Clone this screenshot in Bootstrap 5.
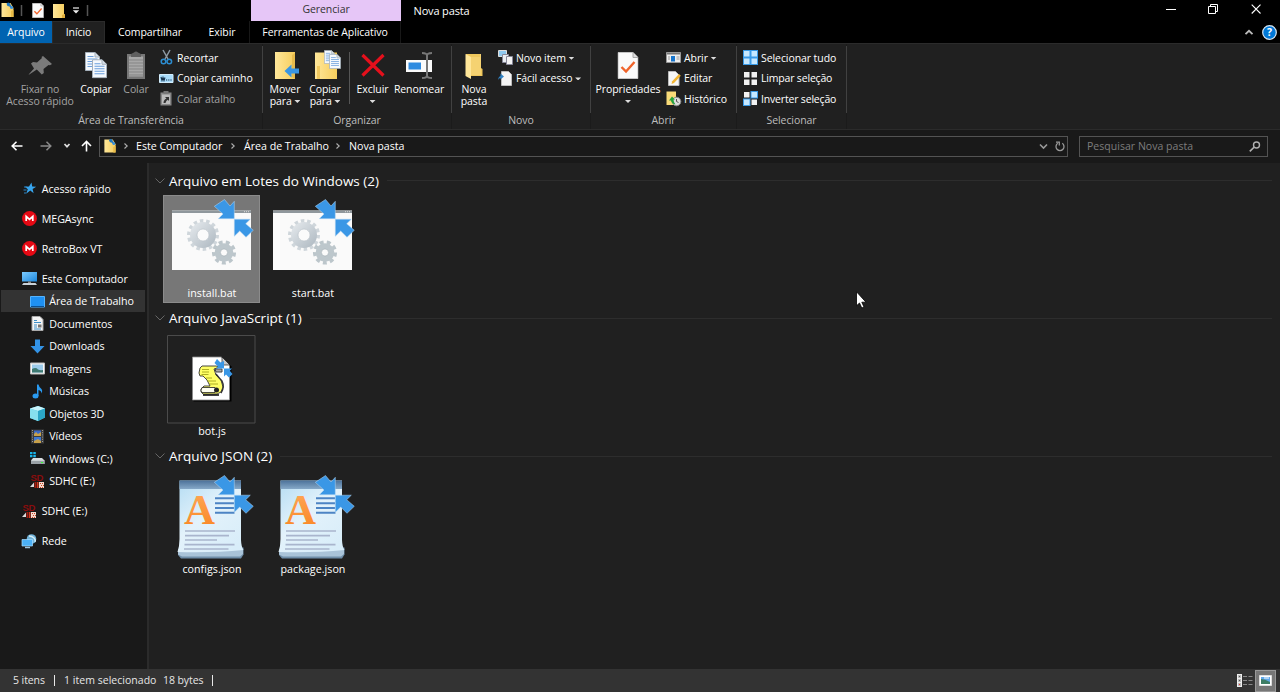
<!DOCTYPE html>
<html lang="pt-BR">
<head>
<meta charset="utf-8">
<title>Nova pasta</title>
<meta name="viewport" content="width=device-width, initial-scale=1">
<link href="https://cdn.jsdelivr.net/npm/bootstrap@5.3.0/dist/css/bootstrap.min.css" rel="stylesheet">
<style>
html,body{height:100%}
body{font-family:"Open Sans","Noto Sans",sans-serif;font-size:10.5px;line-height:12px;letter-spacing:-.08px;color:#fff;background:#202020;overflow:hidden;cursor:default}
svg{display:block;flex:none;overflow:visible}
.explorer{width:1280px;height:692px;position:relative}
.titlebar{height:21px;background:#000}
.ctx-head{width:150px;height:21px;margin-left:162px;background:#e6c6f7;color:#333;line-height:19px}
.tabs{height:22px;background:#000}
.tabs>div{height:22px;line-height:23px;text-align:center;white-space:nowrap}
.tab-file{width:52px;background:#0063b1}
.tab-on{width:53px;background:#202020;border:1px solid #2b2b2b;border-bottom:0;line-height:21px!important}
.ribbon{height:87px;background:#202020;border-top:1px solid #2b2b2b;border-bottom:1px solid #2b2b2b}
.rgroup{height:85px;position:relative;border-right:1px solid #1b1b1b;padding-top:6px}
.rgroup::after{content:"";position:absolute;right:-1px;top:2px;width:1px;height:67px;background:#414141}
.rgroup .caption-row{height:12px;color:#bdbdbd;text-align:center;margin-top:2px}
.rbody{height:62px}
.big{text-align:center;white-space:nowrap;flex:none}
.big svg{margin:1px auto 3px}
.big .lbl{margin-left:-20px;margin-right:-20px}
.off{color:#a3a3a3}
.smalls{gap:5px;display:flex;flex-direction:column}
.smalls>div{height:15.6px;white-space:nowrap}
.smalls .t{margin-left:3px}
.caret{display:inline-block;width:6px;height:3px;background:#ddd;clip-path:polygon(0 0,100% 0,50% 100%);vertical-align:2px}
.addr{height:33px;background:#191919;padding-bottom:1px}
.pathbox{width:969px;height:21px;border:1px solid #535353}
.search{width:189px;height:21px;border:1px solid #535353;margin-left:11px;color:#7d7d7d;letter-spacing:.03px}
.crumb{white-space:nowrap;font-size:10.7px;letter-spacing:-.04px}
.mainrow{height:506px}
.side{width:149px;background:#191919;border-right:2px solid #2b2b2b;padding-top:14.3px;font-size:10.7px;letter-spacing:-.05px}
.side .it{height:22.5px;padding-left:22px;white-space:nowrap}
.side .it svg{margin-right:4.7px}
.side .sub{padding-left:29.5px}
.side .gap{margin-bottom:7.5px}
.side .sel{background:#333;width:144px;margin-left:1px;padding-left:28.5px}
.files{padding:7px 8px 0 7px}
.fgroup{height:137.75px}
.ghead{height:21px;font-size:13.5px;line-height:20px;letter-spacing:0;white-space:nowrap}
.ghead svg{margin:0 4px 0 -1px}
.ghead .rule{height:1px;background:#2d2d2d;margin-left:8px}
.tile{width:97px;height:108px;margin-right:4px;border:1px solid transparent}
.tile svg{margin:-1px 0 0 -1px}
.tile.on{background:#777;border-color:#8b8b8b}
.tile .fn{text-align:center;margin:2.4px -1px 0 0;font-size:10.7px;letter-spacing:.03px}
.status{height:23px;background:#333;color:#e6e6e6;line-height:11px}
.status .bar{width:1px;height:11px;background:#e8e8e8}
.view-on{width:21px;height:22px;background:#777;border:1px solid #999}
.pointer{position:absolute;left:856px;top:291px}
</style>
</head>
<body>
<svg width="0" height="0" class="position-absolute">
<defs>
<linearGradient id="gy" x2="1"><stop stop-color="#ffe79a"/><stop offset="1" stop-color="#f6cd5c"/></linearGradient>
<linearGradient id="gb" x2="1" y2="1"><stop stop-color="#7cccff"/><stop offset="1" stop-color="#1c87dd"/></linearGradient>
<linearGradient id="gj" x2="0.8" y2="1"><stop stop-color="#b4dcf3"/><stop offset=".5" stop-color="#e3f2fb"/><stop offset="1" stop-color="#d8edf9"/></linearGradient>
<linearGradient id="gh" x2="0" y2="1"><stop stop-color="#4c7199"/><stop offset="1" stop-color="#86a9c8"/></linearGradient>
<linearGradient id="go" x2="0" y2="1"><stop stop-color="#ffab5e"/><stop offset="1" stop-color="#f98420"/></linearGradient>
<linearGradient id="gg" x2="1" y2="1"><stop stop-color="#dfe4e8"/><stop offset="1" stop-color="#b4bec6"/></linearGradient>
<symbol id="folderdots" viewBox="0 0 15 16"><path d="M1.500 1h9l3 5v9h-12z" fill="url(#gy)"/><path d="M11 9l2.500-1v7H11z" fill="#e9bb47"/><path d="M6.500 1.500l3-.5 3 4.500-1.500 1-1.500-2-2-.5z" fill="#2c7cc0"/><circle cx="8.300" cy="2" r="1.500" fill="#1f75bd"/><circle cx="11.600" cy="5.500" r="1.500" fill="#3a92dd"/></symbol>
<symbol id="doccheck" viewBox="0 0 21 27"><path d="M.5.5h15l5 5v21H.5z" fill="#fafafa" stroke="#c4c4c4"/><path d="M15.500 .5v5h5" fill="#ddd" stroke="#aaa"/><path d="M4 15l4.500 4.500L17 10" fill="none" stroke="#f0642b" stroke-width="2.400"/></symbol>
<symbol id="page" viewBox="0 0 15 19"><path d="M.5.5h9.500l4.500 4.500v13.500H.5z" fill="#f5f9fd" stroke="#a5b0bb"/><path d="M10 .5v4.500h4.500" fill="#d7e1ea" stroke="#a5b0bb"/><path d="M2.500 4.500h6M2.500 7h10M2.500 9.500h10M2.500 12h10M2.500 14.500h10" stroke="#6a9edb"/></symbol>
<symbol id="mega" viewBox="0 0 15 15"><circle cx="7.500" cy="7.500" r="7.400" fill="#e50914"/><path d="M4.200 10V5.400l3.300 3 3.300-3V10" fill="none" stroke="#fff" stroke-width="1.700"/></symbol>
<symbol id="sd" viewBox="0 0 15 16"><text x="0.500" y="7.800" font-family="Liberation Sans" font-weight="700" font-size="9.500" letter-spacing="-.3" fill="#8b0d0d">SD</text><path d="M0 14l4-4.500V14z" fill="#ddd"/><path d="M4.500 9h2v6h-2z" fill="#a11c10"/><path d="M7 9h1.500v6H7z" fill="#d23b20"/><path d="M9 9h5v6H9z" fill="#f2d9cf"/><path d="M10 10h1v1h-1zM12 10h1v1h-1zM11 12h1v1h-1zM13 12h1v1h-1zM10 14h1v1h-1zM12 14h1v1h-1z" fill="#c8401e"/></symbol>
<symbol id="arrows" viewBox="0 0 97 92"><g fill="#3a97e6" stroke="#b9d9f3" stroke-width=".5"><path d="M61.500 4.500l5.500 6.500 4.300-4.700v17.400h-16l4.700-4.700-8.700-7.700z"/><path d="M71.300 24.200h16l-4.600 4.500 7.600 6.600-7.300 7-6.300-6.300-5.400 5.300z"/></g></symbol>
<symbol id="batch" viewBox="0 0 97 92"><path d="M9 15.500h79V75H9z" fill="#fafafa"/><path d="M9 15.500h79V18H9z" fill="#8f979c"/><path d="M81 16.700h5" stroke="#ddd" stroke-dasharray="1 1"/>
<circle cx="40" cy="40" r="14" fill="none" stroke="#cfd6db" stroke-width="4" pathLength="28" stroke-dasharray="1.100 .9"/><circle cx="40" cy="40" r="9.500" fill="none" stroke="url(#gg)" stroke-width="7"/><circle cx="40" cy="40" r="6" fill="#fbfbfb" stroke="#b9c2c8" stroke-width=".7"/>
<circle cx="61" cy="57.500" r="10.300" fill="none" stroke="#bcc6cb" stroke-width="3.500" pathLength="18" stroke-dasharray="1.100 .9"/><circle cx="61" cy="57.500" r="6.300" fill="none" stroke="#bdc7cc" stroke-width="6"/><circle cx="61" cy="57.500" r="3.600" fill="#fbfbfb" stroke="#a6b1b7" stroke-width=".7"/><use href="#arrows" width="97" height="92"/></symbol>
<symbol id="json" viewBox="0 0 97 92"><path d="M17 77l-2 2v5l3 3.500h60l2.500-4v-7z" fill="#6f8ea9"/><path d="M17 79l-2 .5v4l4 2h58l3-2.500v-5z" fill="#a9c3d8"/><path d="M16.500 9.500H78V69q.3 7 2.500 10-30 3-66 2 2-6 2-13z" fill="url(#gj)"/><path d="M16.500 9.500H78V18H16.500z" fill="url(#gh)"/><text x="21" y="52.500" font-family="Liberation Serif" font-weight="700" font-size="43" fill="url(#go)" letter-spacing="0">A</text><path d="M52 27.300h19M52 32.300h19M52 37h19M52 41.800h19.500" stroke="#4d84c4" stroke-width="2"/><path d="M22 60h50M22 64.700h44M22 69h32M21.500 73.700h50M21 78h44.500" stroke="#a9b5cd" stroke-width="1.700"/><use href="#arrows" width="97" height="92"/></symbol>
<symbol id="jsfile" viewBox="0 0 97 92"><path d="M4.500 2.500h87.500v87.500H4.500z" fill="none" stroke="#4b4b4b"/><path d="M30.500 25H60l8.500 8.500V68.500h-38z" fill="#000"/><path d="M29.500 24H58.500l8 8.500V67h-37z" fill="#fff" stroke="#8a8a8a" stroke-width=".8"/><path d="M59 24v8h8z" fill="#c6c6c6" stroke="#000" stroke-width=".6"/>
<path d="M39 33h14l4 1-6 2 2 6 5 5 2 7-2 5-4 2H40l-2-2v-3l3-3h6l-3-6-4-4h-3l-1-3 1-5z" fill="#ffff66" stroke="#333" stroke-width=".9"/><path d="M39 36.500h7M39 39h7M38.500 41.500h7M43 45h6M44 48h9M46 51h9" stroke="#9b9b10" stroke-width=".8"/><path d="M39 54.500h13q3 2 0 5H39q-2-2 0-5z" fill="#fffff0" stroke="#222" stroke-width=".8"/><path d="M52 36h7v3h-6z" fill="#aaa" stroke="#444"/><path d="M40 62h16" stroke="#000" stroke-width="1.500"/><circle cx="53.500" cy="57" r="2.500" fill="#222"/><path d="M53 41q4 5 6 7 3 6-1 12" fill="none" stroke="#333" stroke-width="1.400"/><g fill="#3a97e6"><path d="M54 26l3.500 3.500 3.500-1.500v7.500h-8l2-2-3.500-3.500z"/><path d="M61 35.500h8l-2.200 2.200 2.700 3.300-3.500 3.500-3-3-2 2z"/></g></symbol>
<symbol id="chev" viewBox="0 0 6 8"><path d="M1.500 1.500L4.200 4 1.500 6.500" fill="none" stroke="#b0b0b0" stroke-width="1.100"/></symbol>
<symbol id="grid" viewBox="0 0 15 15"><path d="M1 1h5.500v5.500H1zM8.500 1H14v5.500H8.500zM1 8.500h5.500V14H1zM8.500 8.500H14V14H8.500z"/></symbol>
</defs>
</svg>

<div class="explorer d-flex flex-column">
  <header class="titlebar d-flex">
    <div class="d-flex align-items-center" style="width:89px">
      <svg width="15" height="16" style="margin-top:-1px"><use href="#folderdots"/></svg>
      <svg width="3" height="12" style="margin-left:5px"><path d="M1.500 0v11" stroke="#555" stroke-width="1.500"/></svg>
      <svg width="12" height="15" style="margin-left:9px"><use href="#doccheck"/></svg>
      <svg width="14" height="16" style="margin-left:8px" viewBox="0 0 14 16"><path d="M1 1h11v10l1 1v3H1z" fill="url(#gy)"/><path d="M10 12l3-1v4h-3z" fill="#e0ad3a"/></svg>
      <svg width="8" height="7" style="margin-left:6px"><path d="M1 1h6" stroke="#eee" stroke-width="1.200"/><path d="M.8 3.200h6.400L4 6.500z" fill="#eee"/></svg>
      <svg width="3" height="12" style="margin-left:6px"><path d="M1.500 0v11" stroke="#555" stroke-width="1.500"/></svg>
    </div>
    <div class="ctx-head text-center">Gerenciar</div>
    <div style="margin-left:12.500px;line-height:21px;font-size:11px;letter-spacing:-.15px">Nova pasta</div>
    <div class="ms-auto d-flex" style="padding:4px 19px 0 0;gap:32.700px">
      <svg width="10" height="10"><path d="M0 5.500h10" stroke="#fff"/></svg>
      <svg width="10" height="10"><path d="M.5 2.500h7v7h-7zM2.500 2.500v-2h7v7h-2" fill="none" stroke="#fff"/></svg>
      <svg width="10" height="10"><path d="M.7.700l8.800 8.800M9.500.700L.7 9.500" stroke="#fff" stroke-width="1.100"/></svg>
    </div>
  </header>
  <nav class="tabs d-flex">
    <div class="tab-file">Arquivo</div><div class="tab-on">Início</div>
    <div style="width:90px">Compartilhar</div><div style="width:54px">Exibir</div>
    <div style="width:152px;border-left:1px solid #181818;border-right:1px solid #181818">Ferramentas de Aplicativo</div>
    <div class="ms-auto d-flex align-items-center" style="padding-right:3px;gap:8px">
      <svg width="10" height="7"><path d="M1.500 5.200L5 1.800l3.500 3.400" fill="none" stroke="#bbb" stroke-width="1.800"/></svg>
      <svg width="15" height="15" viewBox="0 0 15 15"><circle cx="7.500" cy="7.500" r="6.800" fill="#0078d7" stroke="#d8e8f5" stroke-width="1.200"/><text x="7.500" y="11.300" text-anchor="middle" font-size="10.500" font-weight="700" fill="#fff">?</text></svg>
    </div>
  </nav>

  <section class="ribbon d-flex">
    <div class="rgroup" style="width:263px">
      <div class="rbody d-flex">
        <div class="big off" style="width:80px"><svg width="28" height="29" viewBox="0 0 28 29"><path d="M18 5l9 8-2 1.300-1.500-.3-5 4 .3 4-2 1.500-5-5L5 23l-1.500 1 1-1.500L9 17.500l-3-5 2-1.500 4 .5 5-4.500-.500-1z" transform="translate(-1 0)" fill="#7b7b7b"/></svg><div class="lbl">Fixar no<br>Acesso rápido</div></div>
        <div class="big" style="width:32px"><svg width="24" height="29" viewBox="0 0 24 29"><use href="#page" x="1" y="1" width="15" height="19"/><use href="#page" x="8" y="8" width="15" height="19.500"/></svg><div class="lbl">Copiar</div></div>
        <div class="big off" style="width:32px;margin-left:8px"><svg width="20" height="29" viewBox="0 0 20 29"><path d="M1 3h18v25H1z" fill="#777"/><path d="M3 5.500h14v20H3z" fill="#a8a8a8"/><path d="M3 9h14M3 12h14M3 15h14M3 18h14M3 21h14M3 24h14" stroke="#858585"/><path d="M5 3l3-1.500Q10-.5 12 1.500L15 3v3H5z" fill="#5f5f5f"/></svg><div class="lbl">Colar</div></div>
        <div class="smalls" style="margin-left:7px">
          <div class="d-flex align-items-center"><svg width="15" height="15" viewBox="0 0 15 15"><path d="M4 0l5 9M11 0L6 9" stroke="#8d9aa5" stroke-width="1.500"/><circle cx="4.500" cy="11.500" r="2.300" fill="none" stroke="#2c8dd0" stroke-width="1.500"/><circle cx="10.300" cy="11.500" r="2.300" fill="none" stroke="#2c8dd0" stroke-width="1.500"/></svg><span class="t">Recortar</span></div>
          <div class="d-flex align-items-center"><svg width="15" height="15" viewBox="0 0 15 15"><path d="M.5 3.500h13.500v8H.5z" fill="#a9dcfb" stroke="#d2ecfb"/><path d="M2 6l1 3.500 1-3 1 3 1-3" fill="none" stroke="#14304a" stroke-width="1.100"/><path d="M7 9h6" stroke="#14304a" stroke-dasharray="1.200 1"/></svg><span class="t" style="letter-spacing:-.12px">Copiar caminho</span></div>
          <div class="d-flex align-items-center off"><svg width="15" height="15" viewBox="0 0 15 15"><path d="M1.500 1.500h11v13h-11z" fill="#888"/><path d="M3 3.500h8v9.500H3z" fill="#bbb"/><path d="M4.500 0h5v3h-5z" fill="#777"/><path d="M4.500 12q0-3.500 3-4.500L6 6h4v4L8.800 8.800Q7 9.500 6.500 12z" fill="#333"/></svg><span class="t">Colar atalho</span></div>
        </div>
      </div>
      <div class="caption-row">Área de Transferência</div>
    </div>
    <div class="rgroup" style="width:189px">
      <div class="rbody d-flex">
        <div class="big" style="width:40px;margin-left:2px"><svg width="22" height="29" viewBox="0 0 22 29"><path d="M1 1h20v27H1z" fill="url(#gy)"/><path d="M21 2v26l-3-2V4z" fill="#e7bb4c"/><path d="M10.500 20l7-6.500v4H25v5h-7.500v4z" fill="#3995e2"/></svg><div class="lbl">Mover<br>para <i class="caret"></i></div></div>
        <div class="big" style="width:40px"><svg width="21" height="29" viewBox="0 0 21 29"><path d="M0 1.500h22V28H0z" fill="url(#gy)"/><path d="M2 15h3v13H2z" fill="#f1c95f"/><use href="#page" x="9" y="-1" width="11" height="14"/><use href="#page" x="14" y="3" width="12" height="15"/></svg><div class="lbl">Copiar<br>para <i class="caret"></i></div></div>
        <div style="width:1px;height:52px;background:#555;margin:2px 0 0 4px"></div>
        <div class="big" style="width:45px"><svg width="26" height="29" viewBox="0 0 26 29"><path d="M2.500 4l21 20.500M23.500 4L2.500 24.500" stroke="#e5101c" stroke-width="3.200"/></svg><div class="lbl">Excluir<br><i class="caret"></i></div></div>
        <div class="big" style="width:48px"><svg width="28" height="29" viewBox="0 0 28 29"><path d="M1 9h26v12H1z" fill="#fafafa"/><path d="M3.500 11.500H16v7H3.500z" fill="#2e8be0"/><path d="M17 2q5 0 5 2.500v20q0 2.500-5 2.500M27 2q-5 0-5 2.500M27 27q-5 0-5-2.500" fill="none" stroke="#777" stroke-width="2"/></svg><div class="lbl">Renomear</div></div>
      </div>
      <div class="caption-row">Organizar</div>
    </div>
    <div class="rgroup" style="width:139px">
      <div class="rbody d-flex">
        <div class="big" style="width:40px;margin-left:2px"><svg width="18" height="29" viewBox="0 0 18 29"><path d="M1 3h15v14l1.500 1v7H1z" fill="#efc75c"/><path d="M.5 3L6 6v22L.5 25z" fill="#ffe699"/><path d="M6 6h9V3h1v21H6z" fill="#f5d271"/></svg><div class="lbl">Nova<br>pasta</div></div>
        <div class="smalls" style="margin-left:4px">
          <div class="d-flex align-items-center"><svg width="15" height="15" viewBox="0 0 15 15"><path d="M.5.5h8v6h-8z" fill="#8ec8ee" stroke="#ddd"/><path d="M4.500 4.500h6v8h-6z" fill="#e9eef2" stroke="#889"/><path d="M8.500 6.500h6v8h-6z" fill="#f5f5f5" stroke="#889"/></svg><span class="t">Novo item <i class="caret"></i></span></div>
          <div class="d-flex align-items-center"><svg width="15" height="15" viewBox="0 0 15 15"><path d="M3.500.5h7l3 3v11h-10z" fill="#f4f4f4" stroke="#bbb"/><path d="M0 9q.5-3.500 2.500-4V2.500L6 5.500 2.500 8.500V7Q1 7 0 9z" fill="#2f80c2"/></svg><span class="t">Fácil acesso <i class="caret"></i></span></div>
        </div>
      </div>
      <div class="caption-row">Novo</div>
    </div>
    <div class="rgroup" style="width:146px">
      <div class="rbody d-flex">
        <div class="big" style="width:66px;margin-left:4px"><svg width="21" height="29" viewBox="0 0 21 29"><use href="#doccheck" x="-.5" y="1" width="21" height="27"/></svg><div class="lbl">Propriedades<br><i class="caret"></i></div></div>
        <div class="smalls" style="margin-left:5px">
          <div class="d-flex align-items-center"><svg width="15" height="15" viewBox="0 0 15 15"><path d="M.5 2.500h14v10H.5z" fill="#eee" stroke="#999"/><path d="M1 3h13v1.500H1z" fill="#777"/><path d="M5 6h4v5.500H5z" fill="#1775cc"/><path d="M2 7h2M2 9h2M10.500 7h3M10.500 9h3" stroke="#999"/></svg><span class="t">Abrir <i class="caret"></i></span></div>
          <div class="d-flex align-items-center"><svg width="15" height="15" viewBox="0 0 15 15"><path d="M2.500.5h7l3.500 3.500v10.500H2.500z" fill="#f7f7f7" stroke="#bbb"/><path d="M5.500 13l.7-2.700L13 3l1.800 1.700L8 12z" fill="#f2b533"/></svg><span class="t">Editar</span></div>
          <div class="d-flex align-items-center"><svg width="15" height="15" viewBox="0 0 15 15"><path d="M.5.5H10V14H.5z" fill="#f9da78"/><circle cx="10.500" cy="10.500" r="4.300" fill="#ddd" stroke="#888"/><path d="M10.500 8v2.500l2 1" fill="none" stroke="#555"/><path d="M3 9.500l3-4 3 3H7.500q0 3 2 5-4-1-4.500-4z" fill="#23a33a"/></svg><span class="t">Histórico</span></div>
        </div>
      </div>
      <div class="caption-row">Abrir</div>
    </div>
    <div class="rgroup" style="width:110px">
      <div class="rbody d-flex">
        <div class="smalls" style="margin-left:6px">
          <div class="d-flex align-items-center"><svg width="15" height="15" fill="#c6e8ff" style="background:#3a9be8"><use href="#grid"/></svg><span class="t">Selecionar tudo</span></div>
          <div class="d-flex align-items-center"><svg width="15" height="15" fill="#f2f2f2"><use href="#grid"/></svg><span class="t" style="letter-spacing:-.18px">Limpar seleção</span></div>
          <div class="d-flex align-items-center"><svg width="15" height="15" viewBox="0 0 15 15"><path d="M7.500 0H15v7.500H7.500zM0 7.500h7.500V15H0z" fill="#3a9be8"/><path d="M1 1h5.500v5.500H1zM8.500 8.500H14V14H8.500z" fill="#f2f2f2"/><path d="M8.500 1H14v5.500H8.500zM1 8.500h5.500V14H1z" fill="#c6e8ff"/></svg><span class="t" style="letter-spacing:-.18px">Inverter seleção</span></div>
        </div>
      </div>
      <div class="caption-row">Selecionar</div>
    </div>
  </section>

  <section class="addr d-flex align-items-center">
    <div class="d-flex align-items-center" style="width:99px;padding-left:11px">
      <svg width="12" height="10"><path d="M11.500 5H1M5.500.800L1.200 5l4.300 4.200" fill="none" stroke="#fff" stroke-width="1.600"/></svg>
      <svg width="12" height="10" style="margin-left:17px"><path d="M.5 5H11M6.500.800L10.800 5 6.500 9.200" fill="none" stroke="#8a8a8a" stroke-width="1.500"/></svg>
      <svg width="8" height="6" style="margin-left:11px"><path d="M1.500 1l2.500 2.700L6.500 1" fill="none" stroke="#ddd" stroke-width="1.700"/></svg>
      <svg width="11" height="12" style="margin-left:10px"><path d="M5.500 11.500V1.500M1 6l4.500-4.500L10 6" fill="none" stroke="#fff" stroke-width="1.600"/></svg>
    </div>
    <div class="pathbox crumb d-flex align-items-center">
      <svg width="14" height="16" style="margin-left:3px;margin-top:-1px"><use href="#folderdots"/></svg>
      <svg width="6" height="8" style="margin-left:6px"><use href="#chev"/></svg><span style="margin-left:7px;width:87px">Este Computador</span>
      <svg width="6" height="8" style="margin-left:7px"><use href="#chev"/></svg><span style="margin-left:8px;width:84px">Área de Trabalho</span>
      <svg width="6" height="8" style="margin-left:7px"><use href="#chev"/></svg><span style="margin-left:8px">Nova pasta</span>
      <svg class="ms-auto" width="9" height="7"><path d="M1 1.500l3.500 3.500L8 1.500" fill="none" stroke="#999" stroke-width="1.600"/></svg>
      <svg width="10" height="11" viewBox="0 0 10 11" style="margin:0 2px 0 7px"><path d="M7.300 2.300A4 4 0 1 1 2.700 2.300M1 1.200h3.300v3.300" fill="none" stroke="#999" stroke-width="1.300"/></svg>
    </div>
    <div class="search d-flex align-items-center"><span style="margin-left:7px">Pesquisar Nova pasta</span>
      <svg class="ms-auto" width="12" height="11" style="margin-right:6px"><circle cx="7.500" cy="4" r="3" fill="none" stroke="#b0b0b0" stroke-width="1.400"/><path d="M5.300 6L.8 10.300" stroke="#b0b0b0" stroke-width="1.700"/></svg></div>
  </section>

  <main class="mainrow d-flex">
    <aside class="side">
      <div class="it gap d-flex align-items-center"><svg width="15" height="15" viewBox="0 0 15 15"><path d="M9.500 1.500l.7 4 4 .2-3.600 2.300 1 4.200-3.300-2.700-4.200 3.300 1.700-4.600-3-2.400 4.200-.2z" fill="#37a5ee"/><path d="M2 6h3M1.500 9h3M2 12h2" stroke="#2a86c8"/></svg>Acesso rápido</div>
      <div class="it gap d-flex align-items-center"><svg width="15" height="15"><use href="#mega"/></svg>MEGAsync</div>
      <div class="it gap d-flex align-items-center"><svg width="15" height="15"><use href="#mega"/></svg>RetroBox VT</div>
      <div class="it d-flex align-items-center"><svg width="15" height="15" viewBox="0 0 15 15"><path d="M0 1h15v9.500H0z" fill="url(#gb)"/><path d="M6 10.500h3v1.500H6z" fill="#888"/><path d="M1.500 12h12l1.500 2H0z" fill="#c9d2d9"/></svg>Este Computador</div>
      <div class="it sub sel d-flex align-items-center"><svg width="15" height="15" viewBox="0 0 15 15"><path d="M.5 2.500h14v10.500H.5z" fill="#1e90f2" stroke="#53b3ff"/><path d="M1 12.500h13" stroke="#0b4f91"/></svg>Área de Trabalho</div>
      <div class="it sub d-flex align-items-center"><svg width="15" height="15" viewBox="0 0 15 15"><path d="M2 .5h8l3 3v11H2z" fill="#f5f5f5" stroke="#aaa"/><path d="M4 4.500h3M4 6.500h7M4 9h3M4 11h3M4 13h7" stroke="#3f8fc8"/><path d="M8 8.500h3.500v3H8z" fill="#777"/></svg>Documentos</div>
      <div class="it sub d-flex align-items-center"><svg width="15" height="15" viewBox="0 0 15 15"><path d="M5 .5h5V7h4.500l-7 7.500L.5 7H5z" fill="#3393e6"/></svg>Downloads</div>
      <div class="it sub d-flex align-items-center"><svg width="15" height="15" viewBox="0 0 15 15"><path d="M.5 2h14v11H.5z" fill="#f7f7f7" stroke="#bbb"/><path d="M2 3.500h11v8H2z" fill="#9ccbea"/><path d="M2 8q4-2 6 .5 2 1 5 .5v2.500H2z" fill="#3f7a72"/></svg>Imagens</div>
      <div class="it sub d-flex align-items-center"><svg width="15" height="15" viewBox="0 0 15 15"><ellipse cx="5.500" cy="12" rx="3" ry="2.500" fill="#2a9af0"/><path d="M7 .5h1.500q.5 2.500 2.500 4t.5 5q0-3-3-3.500V12H7z" fill="#2a9af0"/></svg>Músicas</div>
      <div class="it sub d-flex align-items-center"><svg width="15" height="15" viewBox="0 0 15 15"><path d="M0 2.500L8 0l7 2.500v9L8 15l-8-3z" fill="#53c4dd"/><path d="M0 2.500L8 0l7 2.500L8 5z" fill="#c8f3fa"/><path d="M0 2.500L8 5v10l-8-3z" fill="#86dfee"/><path d="M8 5l7-2.500v9L8 15z" fill="#2ba5c6"/></svg>Objetos 3D</div>
      <div class="it sub d-flex align-items-center"><svg width="15" height="15" viewBox="0 0 15 15"><path d="M1 .5h13v14H1z" fill="#3c3c3c"/><path d="M2.500 1v13M12.500 1v13" stroke="#999" stroke-dasharray="1 1.200"/><path d="M4 1.500h7v5.500H4z" fill="#3868c9"/><path d="M4 8h7v6H4z" fill="#3f78d2"/><path d="M4 5l2-2 2 2 3-2v4H4zM4 12l4-2 3 2v2H4z" fill="#c7a04a"/></svg>Vídeos</div>
      <div class="it sub d-flex align-items-center"><svg width="15" height="15" viewBox="0 0 15 15"><path d="M0 1h2.500v2.300H0zM3.300 1h2.500v2.300H3.300zM0 4h2.500v2.300H0zM3.300 4h2.500v2.300H3.300z" fill="#18b4ea"/><path d="M3 7h9l2.500 2.500V13H1V9.500z" fill="#d8dcdf"/><path d="M1 9.800h13.500V13H1z" fill="#9aa1a6"/><path d="M11 11.500h2" stroke="#3f3"/></svg>Windows (C:)</div>
      <div class="it gap sub d-flex align-items-center"><svg width="15" height="16"><use href="#sd"/></svg>SDHC (E:)</div>
      <div class="it gap d-flex align-items-center"><svg width="15" height="16"><use href="#sd"/></svg>SDHC (E:)</div>
      <div class="it d-flex align-items-center"><svg width="15" height="15" viewBox="0 0 15 15"><circle cx="9.500" cy="5" r="4.800" fill="#6fb2d8"/><path d="M7 2q3 0 5 2t1 4" stroke="#d5edf7" fill="none" stroke-width="1.500"/><path d="M0 5.500h10.500V12H0z" fill="#4cb0f5" stroke="#a8dcff" stroke-width=".7"/><path d="M3 13.500h5" stroke="#9fc4de" stroke-width="1.500"/></svg>Rede</div>
    </aside>
    <section class="files flex-grow-1">
      <div class="fgroup">
        <div class="ghead d-flex align-items-center"><svg width="10" height="6"><path d="M.5.500L5 5 9.500.500" fill="none" stroke="#666"/></svg><span>Arquivo em Lotes do Windows (2)</span><div class="rule flex-grow-1"></div></div>
        <div class="d-flex" style="padding:4px 0 0 7px">
          <div class="tile on"><svg width="97" height="90" viewBox="0 0 97 90"><use href="#batch" width="97" height="92"/></svg><div class="fn">install.bat</div></div>
          <div class="tile"><svg width="97" height="90" viewBox="0 0 97 90"><use href="#batch" width="97" height="92"/></svg><div class="fn">start.bat</div></div>
        </div>
      </div>
      <div class="fgroup">
        <div class="ghead d-flex align-items-center"><svg width="10" height="6"><path d="M.5.500L5 5 9.500.500" fill="none" stroke="#666"/></svg><span>Arquivo JavaScript (1)</span><div class="rule flex-grow-1"></div></div>
        <div class="d-flex" style="padding:4px 0 0 7px">
          <div class="tile"><svg width="97" height="90" viewBox="0 0 97 90"><use href="#jsfile" width="97" height="92"/></svg><div class="fn">bot.js</div></div>
        </div>
      </div>
      <div class="fgroup">
        <div class="ghead d-flex align-items-center"><svg width="10" height="6"><path d="M.5.500L5 5 9.500.500" fill="none" stroke="#666"/></svg><span>Arquivo JSON (2)</span><div class="rule flex-grow-1"></div></div>
        <div class="d-flex" style="padding:4px 0 0 7px">
          <div class="tile"><svg width="97" height="90" viewBox="0 0 97 90"><use href="#json" width="97" height="92"/></svg><div class="fn">configs.json</div></div>
          <div class="tile"><svg width="97" height="90" viewBox="0 0 97 90"><use href="#json" width="97" height="92"/></svg><div class="fn">package.json</div></div>
        </div>
      </div>
    </section>
  </main>

  <footer class="status d-flex align-items-center">
    <span style="margin-left:13px;width:41px">5 itens</span><div class="bar"></div>
    <span style="margin-left:9px;width:99px;letter-spacing:.03px">1 item selecionado</span><span style="width:49px">18 bytes</span><div class="bar"></div>
    <svg class="ms-auto" width="16" height="13" viewBox="0 0 16 13" style="margin-right:2px"><path d="M0 0h5v13H0z" fill="#eee"/><path d="M1 1h3v3H1zM1 5h3v3H1zM1 9h3v3H1z" fill="#bbb"/><path d="M2 2h1v1H2zM2 6h1v1H2z" fill="#555"/><path d="M2 10h1v1H2z" fill="#e33"/><path d="M6 2.500h4M11.500 2.500h4M6 6.500h4M11.500 6.500h4M6 10.500h4M11.500 10.500h4" stroke="#888"/></svg>
    <div class="view-on d-flex align-items-center justify-content-center" style="margin-right:4px"><svg width="13" height="11" viewBox="0 0 13 11"><path d="M.5.5h12v10H.5z" fill="#fff" stroke="#ddd"/><path d="M2 2h9v7H2z" fill="#62a8ea"/><path d="M2 4q4 0 9 3v2H2z" fill="#3d7d65"/><path d="M5 3h5" stroke="#fff"/></svg></div>
  </footer>

  <svg class="pointer" width="12" height="19" viewBox="0 0 12 19"><path d="M.5.800v14l3-2.800 2.300 5 2.200-1-2.200-4.800h4.200z" fill="#fff" stroke="#000" stroke-width=".8"/></svg>
</div>
<script src="https://cdn.jsdelivr.net/npm/bootstrap@5.3.0/dist/js/bootstrap.bundle.min.js"></script>
</body>
</html>
